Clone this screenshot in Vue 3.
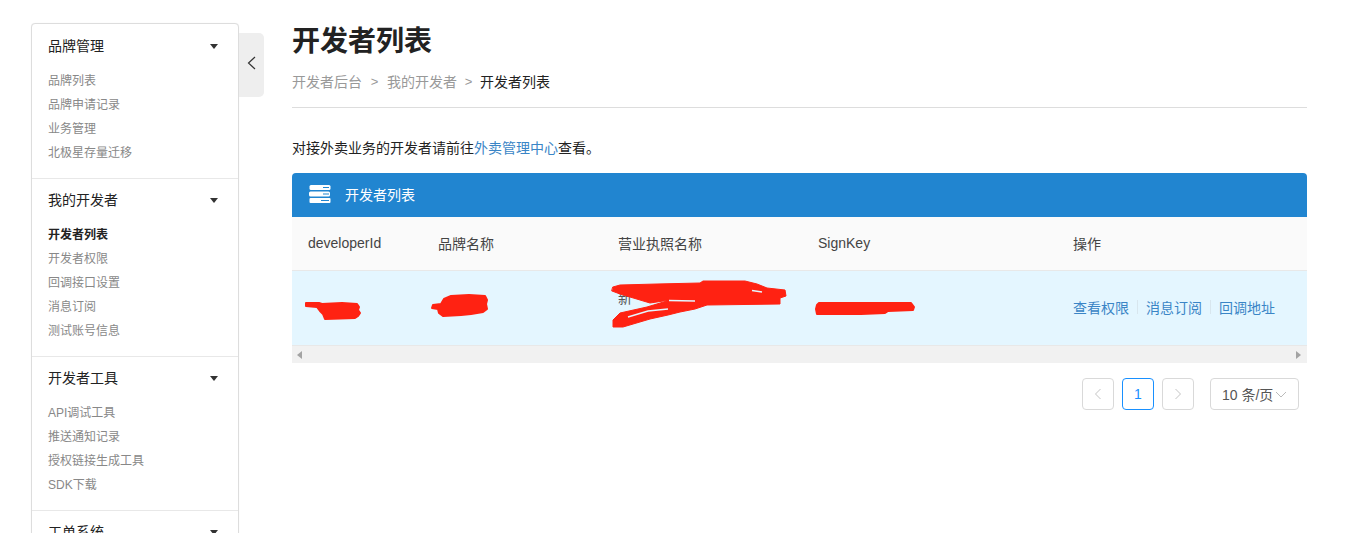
<script setup>
const sections = [
  { title: '品牌管理', items: ['品牌列表', '品牌申请记录', '业务管理', '北极星存量迁移'] },
  { title: '我的开发者', items: ['开发者列表', '开发者权限', '回调接口设置', '消息订阅', '测试账号信息'], active: '开发者列表' },
  { title: '开发者工具', items: ['API调试工具', '推送通知记录', '授权链接生成工具', 'SDK下载'] },
  { title: '工单系统', items: [] },
]
const columns = ['developerId', '品牌名称', '营业执照名称', 'SignKey', '操作']
const actions = ['查看权限', '消息订阅', '回调地址']
</script>

<template>
  <div class="page">
    <aside class="sidebar">
      <section v-for="s in sections" :key="s.title" class="group">
        <div class="group-title">
          <span>{{ s.title }}</span>
          <i class="caret"></i>
        </div>
        <a
          v-for="item in s.items"
          :key="item"
          class="item"
          :class="{ active: item === s.active }"
        >{{ item }}</a>
      </section>
    </aside>

    <div class="toggle">
      <svg width="9" height="14" viewBox="0 0 9 14">
        <path d="M8 1 1.5 7 8 13" fill="none" stroke="#333" stroke-width="1.2" />
      </svg>
    </div>

    <main class="main">
      <h1 class="title">开发者列表</h1>
      <nav class="crumbs">
        <span>开发者后台</span>
        <span class="sep wide">&gt;</span>
        <span>我的开发者</span>
        <span class="sep">&gt;</span>
        <span class="current">开发者列表</span>
      </nav>

      <p class="notice">对接外卖业务的开发者请前往<a class="link">外卖管理中心</a>查看。</p>

      <div class="panel-head">
        <svg class="panel-icon" width="22" height="18" viewBox="0 0 22 18">
          <rect x="0.5" y="0" width="21" height="5" rx="1.5" fill="#fff" />
          <rect x="0" y="6.5" width="21" height="5" rx="1.5" fill="#fff" />
          <rect x="0.5" y="13" width="21" height="5" rx="1" fill="#fff" />
          <rect x="14" y="2" width="6" height="1" fill="#2185d0" />
          <rect x="14" y="8.5" width="6" height="1" fill="#2185d0" />
          <rect x="12" y="15" width="8" height="1" fill="#2185d0" />
        </svg>
        <span>开发者列表</span>
      </div>

      <div class="row head">
        <div v-for="c in columns" :key="c" class="cell">{{ c }}</div>
      </div>

      <div class="row body">
        <div class="cell"></div>
        <div class="cell"></div>
        <div class="cell partial">新</div>
        <div class="cell"></div>
        <div class="cell actions">
          <template v-for="(a, i) in actions" :key="a">
            <i v-if="i" class="divider"></i>
            <a class="link">{{ a }}</a>
          </template>
        </div>
        <svg class="scribble" width="1015" height="74" viewBox="292 271 1015 74">
          <g fill="#ff2212" stroke="#ff2212" stroke-linejoin="round" stroke-linecap="round">
            <path d="M306 303h13l3 1 20-1 15 1 2 3-1 3 2 3-2 3-3 2-30 1-2-5-3-3-3-4-11-1z" stroke-width="2" />
            <path d="M433 305l8-1 3-5 7-3 18-1 16 1 2 4-1 4 1 5-4 3-12 2-10 1-18 1-4-3-1-4-6-1z" stroke-width="2" />
            <path d="M613 287 620 285 657 284 700 283 703 281 745 281 757 284 767 288 785 290 786 296 780 298 780 304 707 305 695 309 680 312 668 315 650 319 623 327 613 327 613 320 620 313 647 307 670 300 650 303 620 294 612 291z" stroke-width="1" />
            <path d="M816 309l1-4 2-2 92 0 3 4-1 3-25 1-3 2-24 1-44 0z" stroke-width="2" />
          </g>
          <g fill="none" stroke="#e4f6ff" stroke-width="1.5">
            <path d="M628 317 648 311 668 309" />
            <path d="M669 300.5 695 301" />
            <path d="M752 290.5 762 292" />
          </g>
        </svg>
      </div>

      <div class="scrollbar">
        <i class="arrow left"></i>
        <i class="arrow right"></i>
      </div>

      <div class="pager">
        <button class="page-btn" disabled>
          <svg width="8" height="12" viewBox="0 0 8 12"><path d="M6.5 1 1.5 6l5 5" fill="none" stroke="#c4c4c4" /></svg>
        </button>
        <button class="page-btn current">1</button>
        <button class="page-btn" disabled>
          <svg width="8" height="12" viewBox="0 0 8 12"><path d="M1.5 1l5 5-5 5" fill="none" stroke="#c4c4c4" /></svg>
        </button>
        <div class="size">
          <span>10 条/页</span>
          <svg width="12" height="7" viewBox="0 0 12 7"><path d="M1 1l5 5 5-5" fill="none" stroke="#bbb" /></svg>
        </div>
      </div>
    </main>
  </div>
</template>

<style>
html, body { margin: 0; background: #fff; overflow: hidden; }
</style>

<style scoped>
.page {
  display: flex;
  align-items: flex-start;
  height: 533px;
  overflow: hidden;
  padding: 23px 0 0 31px;
  box-sizing: border-box;
  font-family: "Liberation Sans", "Noto Sans CJK SC", sans-serif;
  color: #333;
}
.sidebar {
  width: 208px;
  flex: none;
  box-sizing: border-box;
  background: #fff;
  border: 1px solid #ddd;
  border-radius: 4px;
  box-shadow: 0 0 1px rgba(0, 0, 0, 0.08);
}
.group { padding-bottom: 13px; border-bottom: 1px solid #e8e8e8; }
.group-title {
  height: 44px;
  box-sizing: border-box;
  display: flex;
  align-items: center;
  justify-content: space-between;
  padding: 0 20px 5px 16px;
  font-size: 14px;
  color: #222;
}
.group:first-child .group-title { height: 45px; padding-bottom: 3px; }
.caret {
  width: 0;
  height: 0;
  margin-top: 3px;
  border-style: solid;
  border-width: 5px 4.5px 0;
  border-color: #333 transparent transparent;
}
.item {
  display: block;
  height: 24px;
  line-height: 24px;
  padding-left: 16px;
  font-size: 12px;
  color: #888;
}
.item.active { color: #222; font-weight: 700; }
.toggle {
  flex: none;
  width: 25px;
  height: 64px;
  margin-top: 10px;
  display: flex;
  align-items: center;
  padding-left: 8px;
  box-sizing: border-box;
  background: #eee;
  border-radius: 0 5px 5px 0;
}
.toggle svg { margin-top: -5px; }
.main { width: 1015px; flex: none; margin-left: 28px; margin-top: -23px; }
.title {
  margin: 22px 0 0;
  font-size: 28px;
  line-height: 40px;
  font-weight: 700;
  color: #222;
}
.crumbs {
  display: flex;
  margin-top: 10px;
  padding-bottom: 15px;
  border-bottom: 1px solid #ddd;
  font-size: 14px;
  line-height: 20px;
  color: #999;
}
.sep { width: 23px; text-align: center; font-size: 13px; }
.sep.wide { width: 25px; }
.current { color: #222; }
.notice {
  margin: 30px 0 15px;
  font-size: 14px;
  line-height: 20px;
  color: #222;
}
.link { color: #3a85c6; }
.panel-head {
  height: 44px;
  box-sizing: border-box;
  display: flex;
  align-items: center;
  padding: 0 0 2px 17px;
  background: #2185d0;
  border-radius: 4px 4px 0 0;
  color: #fff;
  font-size: 14px;
}
.panel-icon { margin-right: 14px; }
.row {
  display: grid;
  grid-template-columns: 130px 180px 200px 255px 250px;
  align-items: center;
  border-bottom: 1px solid #e8e8e8;
  font-size: 14px;
}
.head { height: 54px; box-sizing: border-box; background: #fafafa; color: #444; }
.cell { padding-left: 16px; margin-top: -1px; }
.body {
  position: relative;
  height: 75px;
  box-sizing: border-box;
  background: #e4f6ff;
}
.partial { margin-top: -23px; color: #555; }
.actions { display: flex; align-items: center; gap: 8px; margin-top: -2px; }
.divider { width: 1px; height: 14px; background: #d8e6ee; }
.scribble { position: absolute; left: 0; top: 0; }
.scrollbar {
  height: 17px;
  display: flex;
  align-items: center;
  justify-content: space-between;
  padding: 0 6px 0 5px;
  background: #f1f1f1;
}
.arrow { width: 0; height: 0; border-style: solid; border-color: transparent; }
.arrow.left { border-width: 4px 5px 4px 0; border-right-color: #a3a3a3; }
.arrow.right { border-width: 4px 0 4px 5px; border-left-color: #a3a3a3; }
.pager {
  display: flex;
  justify-content: flex-end;
  gap: 8px;
  margin-top: 15px;
  padding-right: 8px;
}
.page-btn {
  width: 32px;
  height: 32px;
  padding: 0;
  display: flex;
  align-items: center;
  justify-content: center;
  background: #fff;
  border: 1px solid #d9d9d9;
  border-radius: 4px;
  font: 14px "Liberation Sans", sans-serif;
  color: #1890ff;
}
.page-btn.current { border-color: #1890ff; }
.size {
  width: 89px;
  height: 32px;
  margin-left: 8px;
  box-sizing: border-box;
  display: flex;
  align-items: center;
  justify-content: space-between;
  padding: 0 11px;
  border: 1px solid #d9d9d9;
  border-radius: 4px;
  font-size: 14px;
  color: #555;
  white-space: nowrap;
}
</style>
